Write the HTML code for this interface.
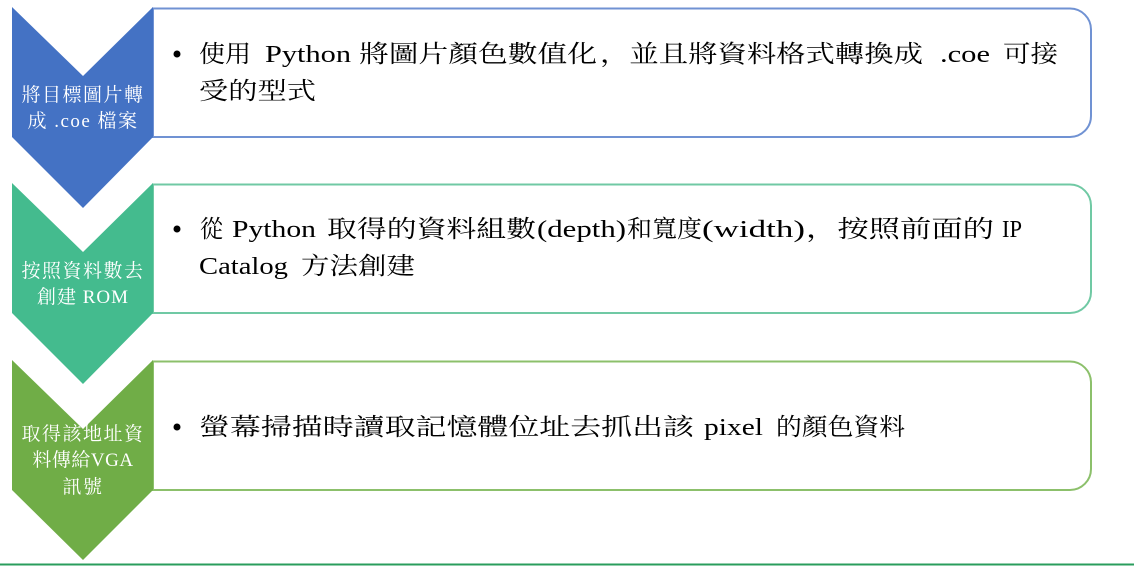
<!DOCTYPE html>
<html><head><meta charset="utf-8"><style>
html,body{margin:0;padding:0;background:#fff;width:1134px;height:566px;overflow:hidden}
svg text{font-family:"Liberation Serif","Noto Serif CJK SC","Noto Sans CJK TC",serif}
</style></head><body>
<svg width="1134" height="566" viewBox="0 0 1134 566" xmlns="http://www.w3.org/2000/svg">
<path d="M153 8.5 H1070 A21 21 0 0 1 1091 29.5 V116 A21 21 0 0 1 1070 137 H153 Z" fill="#fff" stroke="#7092d3" stroke-width="2"/>
<path d="M153 184.5 H1070 A21 21 0 0 1 1091 205.5 V292 A21 21 0 0 1 1070 313 H153 Z" fill="#fff" stroke="#70c9a4" stroke-width="2"/>
<path d="M153 361.5 H1070 A21 21 0 0 1 1091 382.5 V469 A21 21 0 0 1 1070 490 H153 Z" fill="#fff" stroke="#8cc06b" stroke-width="2"/>
<polygon points="12,7 83,76 153,7 153,137 83,208 12,137" fill="#4472c4"/>
<polygon points="12,183 83,252 153,183 153,313 83,384 12,313" fill="#44bb8e"/>
<polygon points="12,360 83,429 153,360 153,490 83,560 12,490" fill="#70ad47"/>
<line x1="0" y1="564.5" x2="1134" y2="564.5" stroke="#2a9d5c" stroke-width="2"/>
<g fill="#fff" font-size="19" text-anchor="middle">
<text x="83" y="101" letter-spacing="1.5">將目標圖片轉</text>
<text x="83" y="127" letter-spacing="1.5">成 .coe 檔案</text>
<text x="83" y="277" letter-spacing="1.5">按照資料數去</text>
<text x="83" y="303" letter-spacing="1">創建 ROM</text>
<text x="83" y="440" letter-spacing="1.5">取得該地址資</text>
<text x="83" y="466" letter-spacing="0.5">料傳給VGA</text>
<text x="83" y="493" letter-spacing="1.5">訊號</text>
</g>
<g fill="#000" font-size="24">
<circle cx="177" cy="54" r="3.5"/>
<text x="199" y="62" textLength="52" lengthAdjust="spacingAndGlyphs">使用</text>
<text x="265" y="62" textLength="86" lengthAdjust="spacingAndGlyphs">Python</text>
<text x="359" y="62" textLength="238" lengthAdjust="spacingAndGlyphs">將圖片顏色數值化</text>
<text x="600" y="62" textLength="323" lengthAdjust="spacingAndGlyphs">，並且將資料格式轉換成</text>
<text x="940" y="62" textLength="50" lengthAdjust="spacingAndGlyphs">.coe</text>
<text x="1003" y="62" textLength="55" lengthAdjust="spacingAndGlyphs">可接</text>
<text x="199" y="99" textLength="117" lengthAdjust="spacingAndGlyphs">受的型式</text>

<circle cx="177" cy="229" r="3.5"/>
<text x="200" y="237" textLength="23" lengthAdjust="spacingAndGlyphs">從</text>
<text x="232" y="237" textLength="84" lengthAdjust="spacingAndGlyphs">Python</text>
<text x="327" y="237" textLength="209" lengthAdjust="spacingAndGlyphs">取得的資料組數</text>
<text x="537" y="237" textLength="89" lengthAdjust="spacingAndGlyphs">(depth)</text>
<text x="627" y="237" textLength="75" lengthAdjust="spacingAndGlyphs">和寬度</text>
<text x="702" y="237" textLength="103" lengthAdjust="spacingAndGlyphs">(width)</text>
<text x="806" y="237" textLength="188" lengthAdjust="spacingAndGlyphs">，按照前面的</text>
<text x="1002" y="237" textLength="20" lengthAdjust="spacingAndGlyphs">IP</text>
<text x="199" y="274" textLength="89" lengthAdjust="spacingAndGlyphs">Catalog</text>
<text x="301" y="274" textLength="114" lengthAdjust="spacingAndGlyphs">方法創建</text>

<circle cx="177" cy="427" r="3.5"/>
<text x="199" y="435" textLength="495" lengthAdjust="spacingAndGlyphs">螢幕掃描時讀取記憶體位址去抓出該</text>
<text x="704" y="435" textLength="59" lengthAdjust="spacingAndGlyphs">pixel</text>
<text x="776" y="435" textLength="129" lengthAdjust="spacingAndGlyphs">的顏色資料</text>
</g>
</svg>
</body></html>
